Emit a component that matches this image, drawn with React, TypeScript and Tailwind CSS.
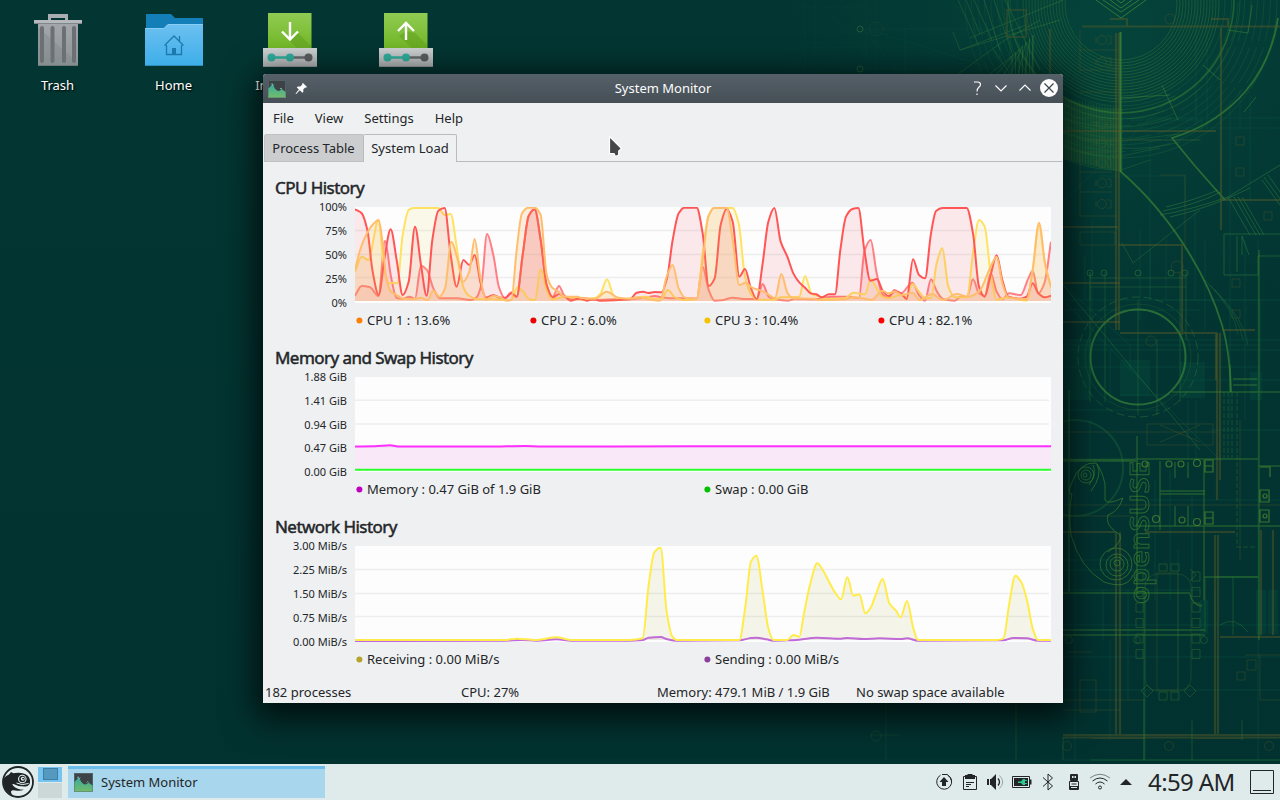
import React from "react";

type Point = [number, number];
type Chunk = { at: number; points: string };
type Series = { color: string; fill: string; chunks: Chunk[] };

/* ---------- chart helpers ---------- */

function toPoints(chunks: Chunk[]): Point[] {
  return chunks.flatMap((chunk) =>
    chunk.points.split(" ").map((pair): Point => {
      const [x, y] = pair.split(",").map(Number);
      return [x + chunk.at, y];
    }),
  );
}

/* Monotone cubic interpolation, so plateaus never overshoot. */
function smoothPath(points: Point[]): string {
  const n = points.length;
  const slope = points.slice(1).map((p, i) => (p[1] - points[i][1]) / (p[0] - points[i][0] || 1));
  const tangent = points.map((_, i) => {
    if (i === 0) return slope[0];
    if (i === n - 1) return slope[n - 2];
    const a = slope[i - 1];
    const b = slope[i];
    return a * b <= 0 ? 0 : (2 * a * b) / (a + b);
  });
  let d = `M${points[0][0]},${points[0][1]}`;
  for (let i = 1; i < n; i++) {
    const [x0, y0] = points[i - 1];
    const [x1, y1] = points[i];
    const h = (x1 - x0) / 3;
    d += `C${(x0 + h).toFixed(1)},${(y0 + tangent[i - 1] * h).toFixed(1)} ${(x1 - h).toFixed(1)},${(y1 - tangent[i] * h).toFixed(1)} ${x1},${y1}`;
  }
  return d;
}

/* Samples are on a grid three times finer than the chart's pixels. */
function Chart({ series, top, height }: { series: Series[]; top: number; height: string }) {
  return (
    <svg className={`block w-full bg-[#fdfdfd] ${height}`} viewBox={`0 ${top} 2088 288`} preserveAspectRatio="none">
      {[70.5, 142.5, 211.5].map((y) => (
        <path key={y} d={`M0,${top + y}H2082`} stroke="#eeeeef" strokeWidth="4" />
      ))}
      {series.map((s, i) => {
        const points = toPoints(s.chunks);
        const line = smoothPath(points);
        const bottom = top + 282;
        return (
          <g key={i}>
            <path d={`${line}V${bottom}H0Z`} fill={s.fill} />
            <path d={line} fill="none" stroke={s.color} strokeWidth="6" strokeLinejoin="round" />
          </g>
        );
      })}
    </svg>
  );
}

const cpuSeries: Series[] = [
  {
    color: "#ff8084",
    fill: "rgba(240,80,100,.13)",
    chunks: [
      { at: -15, points: "15,287 35,258 60,262 85,288 105,123 123,230 140,294 160,296 178,290 195,296 213,197 232,212 250,265 270,295 320,295 365,300 380,292 395,250 411,102 430,165 447,262 465,295 484,277 500,290 518,165 536,48 554,28 572,120 590,255 608,290 627,258 643,287 662,297 700,294" },
      { at: 675, points: "40,300 100,298 140,298 200,292 225,288 245,292 270,295 330,295 350,296 368,200 386,270 404,302 425,301 458,293 490,297 530,297 548,252 566,290 585,298 625,302 645,296 700,298" },
      { at: 1380, points: "10,297 50,290 95,290 132,294 148,155 167,120 185,220 202,282 220,294 238,270 258,280 292,248 312,285 330,302 348,238 366,275 385,298 420,302 436,290 456,290 474,238 492,280 509,288 527,220 545,275 562,298 582,280 617,285 640,235 653,212 670,280 688,250 708,125" },
    ],
  },
  {
    color: "#ffe262",
    fill: "rgba(235,220,100,.13)",
    chunks: [
      { at: -15, points: "15,215 35,170 55,180 85,62 104,215 118,250 130,248 142,250 158,105 176,30 190,24 265,24 284,45 302,42 320,140 340,262 358,288 380,297 430,298 484,300 502,262 520,275 536,297 555,300 572,208 590,270 606,298 650,290 685,297" },
      { at: 675, points: "0,298 45,294 62,280 81,238 100,285 120,298 200,290 220,296 245,296 263,270 285,292 315,300 350,298 368,160 385,50 402,24 458,24 476,70 495,230 512,280 530,299 580,299 604,292 658,290 675,228 695,282" },
      { at: 1380, points: "5,287 35,297 90,295 115,278 150,283 167,237 185,265 202,290 220,295 255,285 275,290 292,252 312,275 330,294 348,294 365,190 382,145 400,260 420,292 456,292 474,160 492,60 509,80 527,220 545,299 580,292 635,302 653,210 672,75 690,190 708,262" },
    ],
  },
  {
    color: "#ff5555",
    fill: "rgba(235,60,80,.11)",
    chunks: [
      { at: -15, points: "15,28 35,40 52,90 68,215 86,285 104,170 122,88 140,180 158,285 176,245 195,80 213,195 230,287 247,120 265,32 284,24 302,165 320,260 340,180 358,195 374,165 392,250 408,293 430,286 452,293 466,293 484,280 500,290 518,165 536,48 554,28 572,120 590,255 608,292 628,282 645,290 662,302 680,297" },
      { at: 675, points: "0,296 20,302 40,297 60,302 150,298 170,278 190,275 205,279 225,276 245,277 262,230 278,120 296,40 313,23 350,23 368,100 386,258 404,235 422,75 440,27 458,65 478,230 495,207 512,262 530,297 548,190 565,65 583,24 602,125 622,170 640,220 656,245 674,262 692,280" },
      { at: 1380, points: "4,283 20,292 42,283 60,283 76,150 93,50 112,27 130,24 148,150 166,242 186,237 202,270 220,288 240,275 258,280 275,297 294,178 312,225 330,235 348,100 363,33 382,24 455,24 474,100 492,260 509,290 527,225 545,166 562,240 580,290 615,296 635,290 653,250 670,280 690,292 708,287" },
    ],
  },
  {
    color: "#ffbe6e",
    fill: "rgba(250,165,80,.17)",
    chunks: [
      { at: -15, points: "15,210 32,145 52,98 70,72 86,60 98,130 108,230 123,275 140,285 160,296 190,297 213,293 232,300 250,272 268,290 285,265 304,125 322,175 340,245 358,215 374,117 390,225 408,298 430,288 450,292 470,302 484,300 500,150 516,40 535,23 554,23 572,45 590,225 606,262 625,275 645,290 685,290" },
      { at: 675, points: "0,293 45,296 80,275 115,293 150,296 175,292 205,298 240,302 260,230 278,195 296,265 315,293 350,296 368,180 385,50 402,24 440,24 458,120 478,255 496,248 515,262 555,277 585,294 604,222 623,280 640,295 700,296" },
      { at: 1380, points: "10,300 45,300 90,298 115,292 150,296 170,300 202,272 220,280 240,275 260,285 292,278 315,300 350,282 385,300 425,282 460,290 492,275 527,200 545,170 562,250 580,292 635,298 653,210 672,68 690,190 708,262" },
    ],
  },
];

const memorySeries: Series[] = [
  {
    color: "#ff30ff",
    fill: "rgba(215,90,220,.13)",
    chunks: [{ at: 0, points: "0,211 60,210 105,207 135,211 400,211 510,209 560,211 1000,210 2088,210" }],
  },
  { color: "#2bff2b", fill: "none", chunks: [{ at: 0, points: "0,281 2088,281" }] },
];

const networkSeries: Series[] = [
  {
    color: "#c264e6",
    fill: "rgba(150,80,190,.1)",
    chunks: [
      { at: 0, points: "0,318 450,317 500,315 545,317 605,313 650,317 820,317" },
      { at: 825, points: "38,315 56,308 92,306 110,312 140,317 328,316 363,309 379,308 410,313 430,317 472,316 508,314 560,308 633,311 652,309 700,312 750,310 812,312 831,310 864,317 1120,316 1150,309 1190,310 1224,317 1263,317" },
    ],
  },
  {
    color: "#ffec4a",
    fill: "rgba(175,175,75,.11)",
    chunks: [
      { at: 0, points: "0,315 450,315 485,311 540,315 605,307 650,315 800,315" },
      { at: 825, points: "0,315 38,310 56,150 73,52 92,38 110,230 127,305 140,315 328,315 346,215 363,80 379,62 398,170 415,280 430,315 472,315 490,300 508,305 522,235 540,150 562,85 580,108 597,140 615,172 633,193 652,127 670,182 688,178 706,235 722,218 740,172 758,132 778,205 798,227 812,247 831,198 850,280 864,315 1100,315 1120,311 1138,205 1156,122 1174,142 1192,200 1208,280 1224,315 1263,315" },
    ],
  },
];

type Legend = { label: string; dot: string };

function HistorySection(props: {
  title: string;
  axis: string[];
  series: Series[];
  top: number;
  height?: string;
  legend: Legend[];
  columns: string;
}) {
  return (
    <section>
      <h2 className="mb-1 h-[30px] pl-3 text-[17px] leading-[30px] tracking-[-0.55px] text-[#232629] [-webkit-text-stroke:0.5px_#232629]">
        {props.title}
      </h2>
      <div className="flex pr-3">
        <div className="-my-2 mr-2 flex w-[84px] flex-col justify-between text-right text-[11px] leading-4">
          {props.axis.map((label) => (
            <span key={label}>{label}</span>
          ))}
        </div>
        <div className="w-[696px]">
          <Chart series={props.series} top={props.top} height={props.height ?? "h-24"} />
        </div>
      </div>
      <div className={`ml-[92px] grid h-[35px] items-center ${props.columns}`}>
        {props.legend.map((item) => (
          <div key={item.label} className="flex items-center gap-1">
            <svg className="ml-px size-[7px]" viewBox="0 0 7 7">
              <circle cx="3.4" cy="3.5" r="3" fill={item.dot} />
            </svg>
            <span>{item.label}</span>
          </div>
        ))}
      </div>
    </section>
  );
}

/* ---------- wallpaper ---------- */

const fanRings = Array.from({ length: 15 }, (_, i) => 56 + i * 3);
const outerRings = Array.from({ length: 9 }, (_, i) => 104 + i * 6.5);
const seats = Array.from({ length: 6 }, (_, i) => 572 + i * 15.5);
const stairs = Array.from({ length: 7 }, (_, i) => i * 3.5);
const hatch = Array.from({ length: 22 }, (_, i) => i * 2.8);
const toilets = [40, 62, 124, 143, 163, 183, 204];

function Wallpaper() {
  return (
    <svg className="absolute inset-0" width="1280" height="800" viewBox="0 0 1280 800" fill="none">
      <defs>
        <linearGradient id="deep" x1="0" y1="0" x2="0" y2="1">
          <stop offset="0" stopColor="#033632" />
          <stop offset="1" stopColor="#023230" />
        </linearGradient>
        <radialGradient id="glow" cx="1110" cy="30" r="330" gradientUnits="userSpaceOnUse">
          <stop offset="0" stopColor="#064a3e" stopOpacity=".7" />
          <stop offset="1" stopColor="#04403a" stopOpacity="0" />
        </radialGradient>
        <linearGradient id="fade" x1="690" y1="0" x2="1130" y2="0" gradientUnits="userSpaceOnUse">
          <stop offset="0" stopColor="#000" />
          <stop offset="1" stopColor="#fff" />
        </linearGradient>
        <mask id="edge">
          <rect width="1280" height="800" fill="url(#fade)" />
        </mask>
      </defs>
      <rect width="1280" height="800" fill="url(#deep)" />
      <rect width="1280" height="800" fill="url(#glow)" />
      <g mask="url(#edge)" opacity=".8">
        {/* faint background grid */}
        <g stroke="#0c5a45" strokeOpacity=".5">
          <path d="M805 0V74M815 0V74M866 0V74M876 0V74M905 28V74M1000 0V74M1010 0V74M800 7H870M800 47H870M860 29H990M860 69H940M1063 118H1280M1063 128H1280M1063 300H1280M1063 350H1280M1092 220V330M1150 140V300M1196 0V120M1207 30V130M1258 240V760M1245 240V420M1230 100V420M1063 345H1260M1063 367H1260M1063 590H1200M1063 760H1280M1075 460V760M1110 640V740M1145 560V760M1178 550V700M1215 590V640M1063 625H1280M1063 657H1280" />
          <path d="M840 0L900 74M870 30L1010 74M820 0L870 60M950 0L1063 110M1063 300L1180 420L1220 460M1063 285L1130 345M1065 200L1180 90" />
          <path d="M1100 176H1185V206M1130 120H1202V130M1130 140H1202M1085 255V300M1140 230V320M1150 250V300M1166 240V300M1195 210V300M1205 240V330M1240 90V130M1250 95V200M1196 90V125M1063 310H1200M1063 340H1280M1130 345V372M1160 300H1260V372M1110 350V400M1180 380H1280M1120 395H1190M1063 410H1160M1090 420V460M1188 400V460M1196 400V460M1150 500H1280M1210 430H1280M1170 470V600M1155 480V600M1192 495V600M1063 560H1130M1063 570H1150M1103 590V640M1128 590V700M1063 690H1280" />
        </g>
        <g fill="#0b6a4c" fillOpacity=".22">
          <path d="M1120 360H1150V396H1120ZM1180 362H1205V398H1180ZM1250 372H1262V400H1250ZM1063 340H1090V400H1063ZM1256 590H1266V634H1256ZM1268 590H1278V634H1268ZM1200 600H1208V634H1200Z" />
        </g>
        <g stroke="#2c8a42" strokeOpacity=".28">
          {outerRings.map((r) => (
            <circle key={r} cx="1121" cy="2" r={r} strokeDasharray={r % 2 ? "40 6" : undefined} />
          ))}
        </g>
        {/* compass rings */}
        <g stroke="#4c9a38" strokeOpacity=".42" strokeWidth=".9">
          {fanRings.map((r) => (
            <circle key={r} cx="1121" cy="4" r={r} />
          ))}
          <path d="M1096 0L1121 18L1146 0M1103 0L1121 12L1139 0M1110 0L1121 8L1132 0M1117 0L1121 3L1125 0" strokeOpacity=".9" />
        </g>
        <circle cx="1121" cy="0" r="113" stroke="#46922f" strokeOpacity=".55" strokeWidth="1.6" />
        <circle cx="1121" cy="0" r="119" stroke="#46922f" strokeOpacity=".3" />
        {/* hatched band */}
        <path d="M1063 97Q1090 110 1121 108V171Q1090 168 1063 158Z" fill="#4f9a30" fillOpacity=".2" />
        <g stroke="#5da638" strokeOpacity=".24">
          {hatch.map((x) => (
            <path key={x} d={`M${1063 + x} ${98 + x / 6}V${158 + x / 4}`} />
          ))}
          <path d="M1063 118Q1092 128 1121 127M1063 132Q1092 143 1121 141L1180 134M1063 145Q1092 158 1121 156L1160 148M1063 158Q1092 171 1121 170L1150 160" />
          <path d="M1121 110Q1150 108 1175 96M1121 127Q1150 126 1172 118M1121 148Q1150 150 1180 142" />
        </g>
        {/* triangular sails and rays */}
        <g stroke="#58a23a" strokeOpacity=".45">
          <path d="M953 32L960 50L1060 20M960 50L1026 25M970 38L1063 0M994 50L1010 74M958 74L1005 40L1040 20" />
          <path d="M958 0L978 44M966 0L980 34M974 0L992 40M984 0L1000 50M994 0L1013 56M1005 0L1040 70" />
          {stairs.map((v) => (
            <path key={v} d={`M${1012 + v} ${56 - v}V74M${990 + v * 2} 74L${1012 + v} ${56 - v}`} />
          ))}
          <path d="M1162 85L1178 120M1170 95L1120 98M1203 65L1220 80M1228 30L1248 33L1252 5M1244 112L1256 97" />
        </g>
        {/* long sweeping arcs */}
        <g stroke="#3e8a35" strokeOpacity=".8" strokeWidth="1.8">
          <path d="M1278 18C1270 72 1236 118 1172 138L1195 166L1225 200" />
          <path d="M1120 171C1168 212 1206 272 1222 325Q1230 352 1231 392" />
          <path d="M1120.500 32V172" stroke="#4f9a34" strokeWidth="2" />
        </g>
        <g stroke="#3c9440" strokeOpacity=".5">
          <path d="M1160 215Q1190 210 1228 197L1280 165M1163 211Q1195 205 1221 192M1166 207Q1195 200 1218 190M1170 217Q1210 208 1250 188" />
          <path d="M1262 180L1280 205M1264 177L1283 203M1268 175L1285 199M1234 197L1256 235M1238 197L1260 235M1242 197L1264 235M1228 197L1250 235" />
          <path d="M1224 234H1280M1224 234V275H1258V256H1280M1237 236V272M1242 236V255M1242 236L1249 255" />
          <path d="M1215 290Q1245 320 1248 345M1210 285Q1240 315 1243 340M1205 280Q1235 310 1238 335" strokeOpacity=".3" />
          <path d="M1122 243L1133 263L1200 210M1063 285L1200 450" strokeOpacity=".4" />
        </g>
        {/* round table */}
        <circle cx="1138" cy="357" r="47.500" stroke="#3d8d38" strokeOpacity=".8" strokeWidth="2" />
        <circle cx="1138" cy="357" r="60" stroke="#3d8d38" strokeOpacity=".45" strokeDasharray="8 4" />
        <circle cx="1138" cy="357" r="53" stroke="#3d8d38" strokeOpacity=".25" />
        <circle cx="1075" cy="468" r="48" stroke="#29803e" strokeOpacity=".35" strokeWidth="2" />
        <path d="M1090 272V402M1105 272V402M1138 300V415M1157 340V415M1180 272V402M1090 287H1186M1090 278H1186M1090 272V300M1186 272V340" stroke="#45983a" strokeOpacity=".35" />
        {[1090, 1104, 1138, 1171, 1185].map((x) => (
          <circle key={x} cx={x} cy="273" r="3" stroke="#45983a" strokeOpacity=".5" />
        ))}
        {/* floor plan walls */}
        <g stroke="#676226" strokeOpacity=".5" strokeWidth="2.2">
          <path d="M1082 26.500H1280M1050 29V190M1116 33V330M1119 33V330M1221 28V230M1007 10H1026V37H1007ZM1110 19H1127V27M1211 19H1228V26" />
          <path d="M1063 131H1216M1222 200H1280M1118 245H1182V335M1120 333H1216V380M1222 330H1255M1063 322H1120M1063 283H1120M1063 227H1118" />
          <path d="M1217 333V500M1220 333V480M1063 532H1115M1145 532H1235M1116 532V735M1120 532V735M1215 535V735M1218 535V735M1220 637H1280M1261 530V635M1273 530V635M1063 735H1280M1092 738H1145M1193 738H1243M1063 737.500H1280" />
        </g>
        <g stroke="#6b6428" strokeOpacity=".36">
          <path d="M1080 30V72M1080 50H1118M1080 70H1118M1080 92H1115M1080 150V216M1080 152H1112M1080 172H1112M1080 192H1112M1080 216H1118M1080 232H1115V245H1080ZM1080 140H1200M1160 175H1185V250M1063 432H1216M1147 424H1213V445H1147V424M1160 425L1200 442M1200 425L1160 442M1063 516H1130M1063 505H1280M1240 420V560M1260 655V700H1280M1245 655H1280M1080 680H1096V712H1080ZM1157 573H1178V690H1157ZM1063 710H1120M1063 700H1145" />
          <path d="M1067 652H1092M1247 660H1256V670H1247ZM1237 672H1245V680H1237ZM1063 670V650" />
          {toilets.map((y) => (
            <g key={y}>
              <circle cx="1102" cy={y} r="4.500" />
              <path d={`M1107 ${y - 4}H1111V${y + 4}H1107M1096 ${y - 3}V${y + 3}`} />
            </g>
          ))}
          <circle cx="1067" cy="746" r="4.500" />
          <circle cx="1169" cy="746" r="4.500" />
          <circle cx="1269" cy="746" r="4.500" />
          <circle cx="876" cy="29" r="7" />
          <circle cx="1151" cy="341" r="5" />
          <circle cx="1177" cy="267" r="6" />
          <circle cx="1170" cy="19" r="5" />
          <path d="M1236 137H1244V145H1236ZM1236 168H1244V176H1236ZM1264 212H1272V220H1264ZM1232 279H1240V287H1232ZM1232 310H1240V318H1232Z" />
        </g>
        {/* green walls */}
        <g stroke="#4b9c30" strokeOpacity=".5" strokeWidth="1.400">
          <path d="M1063 459.500H1135M1063 461H1138M1135 459H1258M1172 392H1257M1259 250V640M1257 392H1280M1137 436V593M1204 460V600M1137 526H1258M1063 593H1190M1069 390V592M1063 630H1205M1063 635H1205M1204 577H1258M1258 526H1280M1258 466H1280M1230 365V392M1233 379H1257M1233 385H1257" />
          <path d="M1160 461V530M1175 462V478M1188 462V478M1175 506V526M1188 506V526M1160 491H1205M1160 494H1205M1190 594Q1192 605 1202 606" />
        </g>
        <g stroke="#7db52c" strokeOpacity=".6" strokeWidth="1.200">
          <path d="M1205 460H1213V472H1205ZM1205 466H1213M1205 512H1213V524H1205ZM1205 518H1213M1260 490H1269V502H1260ZM1260 510H1269V522H1260ZM1260 467H1270V477" />
          <circle cx="1197" cy="463" r="3.500" />
          <circle cx="1197" cy="522" r="3.500" />
          <circle cx="1181" cy="464" r="3" />
          <circle cx="1169" cy="464" r="3" />
          <circle cx="1156" cy="519" r="3.500" />
          <circle cx="1182" cy="520" r="3" />
          <circle cx="1145" cy="464" r="3" />
          <circle cx="1265" cy="496" r="2" />
          <circle cx="1265" cy="516" r="2" />
        </g>
        <g stroke="#3b9a38" strokeOpacity=".38">
          <path d="M1224 392V458M1228 392V458M1232 392V458M1237 392V547H1257" strokeDasharray="5 2" />
          <path d="M1205 577V632M1216 577H1258M1233 577V635M1220 625Q1235 615 1248 632" />
          <circle cx="1069" cy="640" r="3.500" />
          <circle cx="1137" cy="640" r="3.500" />
          <circle cx="1204" cy="640" r="3.500" />
          <path d="M1144 593V760M1144 700V760M1192 720V760M1242 720V740M1091 760H1280" />
        </g>
        {/* chameleon outline */}
        <g stroke="#56a52c" strokeOpacity=".6">
          <path d="M1072 494Q1066 495 1073 480Q1080 462 1096 463Q1102 470 1105 484V500Q1108 505 1123 498Q1118 512 1108 515Q1104 525 1120 535Q1123 542 1108 552M1072 494Q1068 510 1071 535Q1080 568 1104 582Q1127 590 1133 575" />
          <circle cx="1086" cy="475" r="8" />
          <circle cx="1086" cy="475" r="5" />
          <circle cx="1085" cy="475" r="2" />
          <path d="M1097 464Q1103 475 1091 491M1093 465Q1097 474 1089 485" />
          <circle cx="1116" cy="564" r="16" />
          <circle cx="1117" cy="565" r="11" />
          <circle cx="1117" cy="564" r="7" />
          <circle cx="1117" cy="563" r="3" />
          <text
            transform="translate(1149 604) rotate(-90)"
            textLength="143"
            lengthAdjust="spacingAndGlyphs"
            fontSize="27"
            fontWeight="600"
            strokeWidth="0.9"
          >
            openSUSE
          </text>
        </g>
        {/* meeting table */}
        <g stroke="#4f8528" strokeOpacity=".42">
          {seats.map((y) => (
            <path key={y} d={`M1136 ${y}H1143V${y + 9}H1136ZM1192 ${y}H1200V${y + 9}H1192Z`} />
          ))}
          <path d="M1159 692H1167V700H1159ZM1171 692H1179V700H1171ZM1159 564H1167V571H1159ZM1171 564H1179V571H1171ZM1147 685L1153 691L1147 697L1141 691ZM1190 685L1196 691L1190 697L1184 691ZM1190 569L1196 575L1190 581" />
          <rect x="1145" y="574" width="46" height="117" rx="13" strokeOpacity=".3" />
          <path d="M1063 737V760M870 735H900M1016 703V760M886 703V760" />
        </g>
        <circle cx="876" cy="736" r="5" stroke="#4b9c30" strokeOpacity=".4" />
        <circle cx="860" cy="29" r="3" stroke="#65b13c" strokeOpacity=".9" />
        <circle cx="860" cy="69" r="3" stroke="#65b13c" strokeOpacity=".9" />
      </g>
    </svg>
  );
}

/* ---------- desktop icons ---------- */

function TrashIcon() {
  return (
    <svg width="58" height="58" viewBox="0 0 58 58">
      <defs>
        <linearGradient id="bin" x1="0" y1="0" x2="0" y2="1">
          <stop offset="0" stopColor="#a3a7ab" />
          <stop offset="1" stopColor="#8d9696" />
        </linearGradient>
      </defs>
      <path d="M19 10V4h20v6h-3V8H22v2z" fill="#a9adb1" />
      <path d="M9 13h40v42.500H9z" fill="url(#bin)" />
      <path d="M9 17l40 36v2.500H9z" fill="#7c8587" fillOpacity=".35" />
      <path d="M5 10h48v4H5z" fill="#b6babd" />
      <path d="M5 13.500h48" stroke="#81868a" />
      <path d="M13 18v33M23.500 18v33M35 18v33M45 18v33" stroke="#6c7074" strokeWidth="4" strokeLinecap="round" />
      <path d="M9 55.500h40" stroke="#70787a" />
    </svg>
  );
}

function HomeIcon() {
  return (
    <svg width="58" height="58" viewBox="0 0 58 58">
      <defs>
        <linearGradient id="folder" x1="0" y1="0" x2="0" y2="1">
          <stop offset="0" stopColor="#6cc0f0" />
          <stop offset="1" stopColor="#3daee9" />
        </linearGradient>
      </defs>
      <path d="M1 4h25l4 4h28v14H1z" fill="#147eb8" />
      <path d="M0 18h19l4-4h35v42H0z" fill="url(#folder)" />
      <path d="M0 18.500h19l4-4h35" fill="none" stroke="#8fd0f5" strokeWidth=".8" />
      <path d="M0 55.500h58" stroke="#2d8bbd" />
      <path d="M19.500 35.500L29 26l9.500 9.500M21.500 35v9.500h15V35M34.500 31v-5" fill="none" stroke="#1d78ad" strokeWidth="1.300" />
      <path d="M27 38h4v6.500h-4z" fill="#1d78ad" />
    </svg>
  );
}

function InstallIcon({ up = false }: { up?: boolean }) {
  return (
    <svg width="58" height="58" viewBox="0 0 58 58">
      <defs>
        <linearGradient id="box" x1="0" y1="0" x2="0" y2="1">
          <stop offset="0" stopColor="#90cb52" />
          <stop offset="1" stopColor="#71b626" />
        </linearGradient>
        <linearGradient id="tray" x1="0" y1="0" x2="0" y2="1">
          <stop offset="0" stopColor="#d0d3d4" />
          <stop offset="1" stopColor="#b3b6b8" />
        </linearGradient>
      </defs>
      <path d="M7 3h43.500v36H7z" fill="url(#box)" />
      <path d={up ? "M38 23l12 12v4H36L22 26l7-5z" : "M37 23l13 13v3H37l-9-9z"} fill="#64a41f" fillOpacity=".6" />
      <path
        d={up ? "M29 30V13.500M21 21l8-8 8 8" : "M29 12v16.500M21 21.500l8 8 8-8"}
        fill="none"
        stroke="#fff"
        strokeWidth="2.400"
      />
      <path d="M2 38h54v19H2z" fill="url(#tray)" />
      <path d="M2 56.500h54" stroke="#9a9d9f" />
      <path d="M10 47.500h19" stroke="#30ae9d" strokeWidth="2.500" />
      <path d="M29 47.500h18" stroke="#686b6d" strokeWidth="2.500" />
      <circle cx="10.500" cy="47.500" r="4" fill="#30ae9d" />
      <circle cx="29" cy="47.500" r="4" fill="#30ae9d" />
      <circle cx="47.500" cy="47.500" r="4" fill="#5c5f61" />
    </svg>
  );
}

function DesktopItem({ icon, label }: { icon: React.ReactNode; label?: string }) {
  return (
    <div className="flex w-[116px] flex-col items-center gap-[7px]">
      {icon}
      <span className="-ml-px h-5 text-[13px] leading-5 text-white [text-shadow:1px_1px_2px_#000]">{label}</span>
    </div>
  );
}

function MonitorIcon({ className }: { className: string }) {
  return (
    <svg className={className} viewBox="0 0 18 18">
      <defs>
        <linearGradient id="graph" x1="0" y1="0" x2="0" y2="1">
          <stop offset="0" stopColor="#3aab9c" />
          <stop offset="1" stopColor="#72bd69" />
        </linearGradient>
      </defs>
      <path d="M0 0h18v18H0z" fill="#3d4246" />
      <path d="M0 8.500Q2 7.500 3.200 5.500Q4.600 3 5.800 6.500Q7 9.500 9 10.500Q11 11.500 12.500 10Q14 8.500 15.500 10.500L18 12V18H0z" fill="url(#graph)" />
      <path d="M3 4.500l1-1 1 2 1-1M12 9l1-1 1 1" fill="none" stroke="#8bd4c9" strokeWidth=".7" />
      <path d="M.5.500h17v17H.5z" fill="none" stroke="#60777a" strokeOpacity=".6" />
    </svg>
  );
}

/* ---------- window ---------- */

function TitleBar() {
  return (
    <header className="grid h-[29px] grid-cols-[1fr_auto_1fr] items-center rounded-t-[3px] bg-linear-to-b from-[#566068] to-[#464f56] pr-[5px] pl-[5px] text-[#fcfcfc]">
      <div className="flex items-center gap-[9px]">
        <MonitorIcon className="size-[18px]" />
        <svg className="size-[13px]" viewBox="0 0 13 13">
          <path d="M8 1l4 4-1 .7-.8-.2-2 2 .2 2.300-1 1-2.600-2.600L1.200 12l-.7-.4 3.400-4L1.800 5.400l1-1 2.500.2 2-2L7 1.700z" fill="#fcfcfc" />
        </svg>
      </div>
      <h1 className="pb-px text-center text-[13px] leading-5">System Monitor</h1>
      <svg className="mb-px h-6 w-[84px] justify-self-end" viewBox="0 0 84 24" fill="none" stroke="#fcfcfc" strokeWidth="1.200">
        <path d="M-1 8.500V7.500Q-1 6 1 6H3.500Q6.500 6 6.500 8.500Q6.500 10 4.800 11.300Q3 13 3 15.500M3 17.500V19" />
        <path d="M21.500 9.500l5.500 5.500L32.500 9.500M45.500 14.500L51 9l5.500 5.500" />
        <circle cx="75" cy="12" r="9" fill="#fcfcfc" stroke="none" />
        <path d="M70.500 7.500l9 9M79.500 7.500l-9 9" stroke="#3c444a" />
      </svg>
    </header>
  );
}

function Tabs() {
  return (
    <div className="flex h-7 text-[13px]">
      <div className="ml-px flex w-[99px] items-center justify-center rounded-tl-[3px] border-t border-b border-l border-[#bfc1c3] bg-[#cccdcf] pt-px pr-px">
        Process Table
      </div>
      <div className="flex w-[94px] items-center justify-center rounded-t-[2px] border border-b-0 border-[#b9bbbd] bg-[#eff0f1]">
        System Load
      </div>
      <div className="mr-px grow border-b border-[#b9bbbd]" />
    </div>
  );
}

function SystemMonitorWindow() {
  return (
    <div className="absolute top-[74px] left-[263px] flex h-[629px] w-[800px] flex-col rounded-t-[3px] bg-[#eff0f1] text-[13px] text-[#232629] shadow-[0_8px_32px_8px_rgba(0,0,0,0.7)]">
      <TitleBar />
      <nav className="flex h-[31px] items-center gap-[21px] pl-[10px]">
        {["File", "View", "Settings", "Help"].map((item) => (
          <span key={item}>{item}</span>
        ))}
      </nav>
      <Tabs />
      <div className="flex flex-col gap-[5px] pt-[11px]">
        <HistorySection
          title="CPU History"
          axis={["100%", "75%", "50%", "25%", "0%"]}
          series={cpuSeries}
          top={21}
          columns="grid-cols-[174px_174px_174px_174px]"
          legend={[
            { label: "CPU 1 : 13.6%", dot: "#ff8000" },
            { label: "CPU 2 : 6.0%", dot: "#f00000" },
            { label: "CPU 3 : 10.4%", dot: "#f3c300" },
            { label: "CPU 4 : 82.1%", dot: "#ff0000" },
          ]}
        />
        <HistorySection
          title="Memory and Swap History"
          axis={["1.88 GiB", "1.41 GiB", "0.94 GiB", "0.47 GiB", "0.00 GiB"]}
          series={memorySeries}
          top={0}
          height="h-[95px]"
          columns="grid-cols-[348px_348px]"
          legend={[
            { label: "Memory : 0.47 GiB of 1.9 GiB", dot: "#c000c0" },
            { label: "Swap : 0.00 GiB", dot: "#00c000" },
          ]}
        />
        <HistorySection
          title="Network History"
          axis={["3.00 MiB/s", "2.25 MiB/s", "1.50 MiB/s", "0.75 MiB/s", "0.00 MiB/s"]}
          series={networkSeries}
          top={33}
          columns="grid-cols-[348px_348px]"
          legend={[
            { label: "Receiving : 0.00 MiB/s", dot: "#b5a32e" },
            { label: "Sending : 0.00 MiB/s", dot: "#8a409c" },
          ]}
        />
      </div>
      <footer className="mt-auto grid h-[22px] grid-cols-[196px_196px_199px_auto] items-center pt-[2px] pl-[2px]">
        <span>182 processes</span>
        <span>CPU: 27%</span>
        <span>Memory: 479.1 MiB / 1.9 GiB</span>
        <span>No swap space available</span>
      </footer>
    </div>
  );
}

/* ---------- taskbar ---------- */

function ChameleonLogo() {
  return (
    <svg className="size-8" viewBox="0 0 32 32">
      <circle cx="16" cy="16" r="15" fill="#e3eeee" stroke="#1f2426" strokeWidth="1.800" />
      <path
        d="M1.500 12.500Q4 9.500 7 8.500L9 6Q10.500 7.500 13 7Q21 6 25.500 9.500Q28.500 12.500 28 16.500Q27.500 19.500 24 20.500Q17 21 11.500 18Q9.500 17.500 11 19.500Q14 23.500 22 23.800Q18 25.500 13.500 24.500Q10 23.500 9 25.500Q8.500 27 11 29.500Q3 26.500 1.500 18z"
        fill="#1f2426"
      />
      <path d="M14.500 17Q20 20 26.500 17.500" fill="none" stroke="#e3eeee" strokeWidth="1" />
      <circle cx="20.300" cy="13" r="4.300" fill="#e3eeee" />
      <circle cx="20.300" cy="13" r="3.200" fill="#1f2426" />
      <circle cx="20.800" cy="12.800" r="2" fill="#e3eeee" />
      <path d="M20.300 12h1.800v1.300h-1.800z" fill="#1f2426" />
    </svg>
  );
}

function TrayIcon({ children }: { children: React.ReactNode }) {
  return (
    <svg className="h-[22px] w-[26px]" viewBox="0 0 26 22" fill="none" stroke="#232629" strokeWidth="1">
      {children}
    </svg>
  );
}

function Tray() {
  return (
    <div className="flex items-center">
      <TrayIcon>
        <path d="M16.500 4A7.500 7.500 0 1 1 9.500 4.200M11 3.500h5.500M16.500 4A7.500 7.500 0 0 1 20.500 10" />
        <path d="M13 6l4.500 5H15v4h-4v-4H8.500z" fill="#232629" stroke="none" />
      </TrayIcon>
      <TrayIcon>
        <path d="M6.500 5.500h13v13h-13zM9 11.500h8M9 13.500h5M9 15.500h3" />
        <path d="M8 4h2.500V3h5v1H18v4H8z" fill="#232629" stroke="none" />
      </TrayIcon>
      <TrayIcon>
        <path d="M4 8h2v6H4zM7 8h1l5-5v16l-5-5H7z" fill="#232629" stroke="none" />
        <path d="M15 7.500Q18 11 15 14.500" strokeWidth="1.300" />
        <path d="M16.500 4.500Q23 11 16.500 17.500" strokeOpacity=".35" />
      </TrayIcon>
      <TrayIcon>
        <path d="M3.500 5.500h17v11h-17z" />
        <path d="M5 7h14v8H5z" fill="#232629" stroke="none" />
        <path d="M21 8.500h1.500v5H21z" fill="#232629" stroke="none" />
        <path d="M9 10.500h3l2-2.500h2v6h-2l-2-2H9zM16 9h2v1h-2zM16 12h2v1h-2z" fill="#2dc98f" stroke="none" />
      </TrayIcon>
      <TrayIcon>
        <path d="M8 6.500l9.500 8.500-4.500 4V3l4.500 4L8 15.500" />
      </TrayIcon>
      <TrayIcon>
        <path d="M9.500 3.500h7v6h-7zM8.500 10.500h9v8h-9z" />
        <path d="M10 4h6v6h-6zM9 15h8v3H9z" fill="#232629" stroke="none" />
        <path d="M11 5h1.500v2H11zM13.500 5H15v2h-1.500zM10 16h6v1h-6z" fill="#dfebea" stroke="none" />
        <path d="M10.500 13h5" />
      </TrayIcon>
      <TrayIcon>
        <path d="M3 7Q13 -.5 23 7" strokeOpacity=".55" />
        <path d="M5.500 10Q13 4 20.500 10M8.500 13Q13 9 17.500 13" />
        <circle cx="13" cy="16.500" r="1.500" />
      </TrayIcon>
      <TrayIcon>
        <path d="M7 14l6-6 6 6z" fill="#232629" stroke="none" />
      </TrayIcon>
    </div>
  );
}

function Taskbar() {
  return (
    <footer className="relative flex h-9 items-center bg-[#dfebea] text-[#232629]">
      <div className="ml-[2px]">
        <ChameleonLogo />
      </div>
      <div className="ml-1 flex w-6 flex-col gap-px">
        <div className="flex h-[15px] justify-center bg-[#75c4ef] pt-px">
          <div className="h-3 w-[15px] border border-[#3b7fa8] bg-[#5599bf]" />
        </div>
        <div className="h-[15px] bg-[#ccd8d7]" />
      </div>
      <div className="ml-[6px] flex h-8 w-[257px] items-center border-t-[3px] border-[#6cbfeb] bg-[#a8d6ec] pb-[2px] pl-[6px] text-[13px]">
        <MonitorIcon className="size-[19px]" />
        <span className="ml-2">System Monitor</span>
      </div>
      <div className="ml-auto flex items-center">
        <Tray />
        <span className="ml-[9px] w-[88px] text-[24px] leading-8 tracking-[-0.6px] whitespace-nowrap">4:59 AM</span>
        <svg className="mr-[6px] ml-[14px] size-6" viewBox="0 0 24 24" fill="none" stroke="#232629">
          <path d="M.5.500h23v23H.5zM3 20.500h18" />
        </svg>
      </div>
    </footer>
  );
}

function Pointer() {
  return (
    <svg className="absolute top-[135px] left-[608px]" width="16" height="24" viewBox="0 0 16 24">
      <path d="M1.500 1.500L13.500 13.500L10.700 16V20L7.500 21.500L6 18.500H1.500z" fill="#44474a" stroke="#fff" strokeWidth="1.200" />
    </svg>
  );
}

export default function App() {
  return (
    <div className="relative flex h-[800px] w-[1280px] flex-col overflow-hidden bg-[#033430] font-['Noto_Sans',sans-serif]">
      <Wallpaper />
      <main className="relative flex grow items-start pt-[10px]">
        <DesktopItem icon={<TrashIcon />} label="Trash" />
        <DesktopItem icon={<HomeIcon />} label="Home" />
        <DesktopItem icon={<InstallIcon />} label="Installation" />
        <DesktopItem icon={<InstallIcon up />} />
      </main>
      <SystemMonitorWindow />
      <Taskbar />
      <Pointer />
    </div>
  );
}
